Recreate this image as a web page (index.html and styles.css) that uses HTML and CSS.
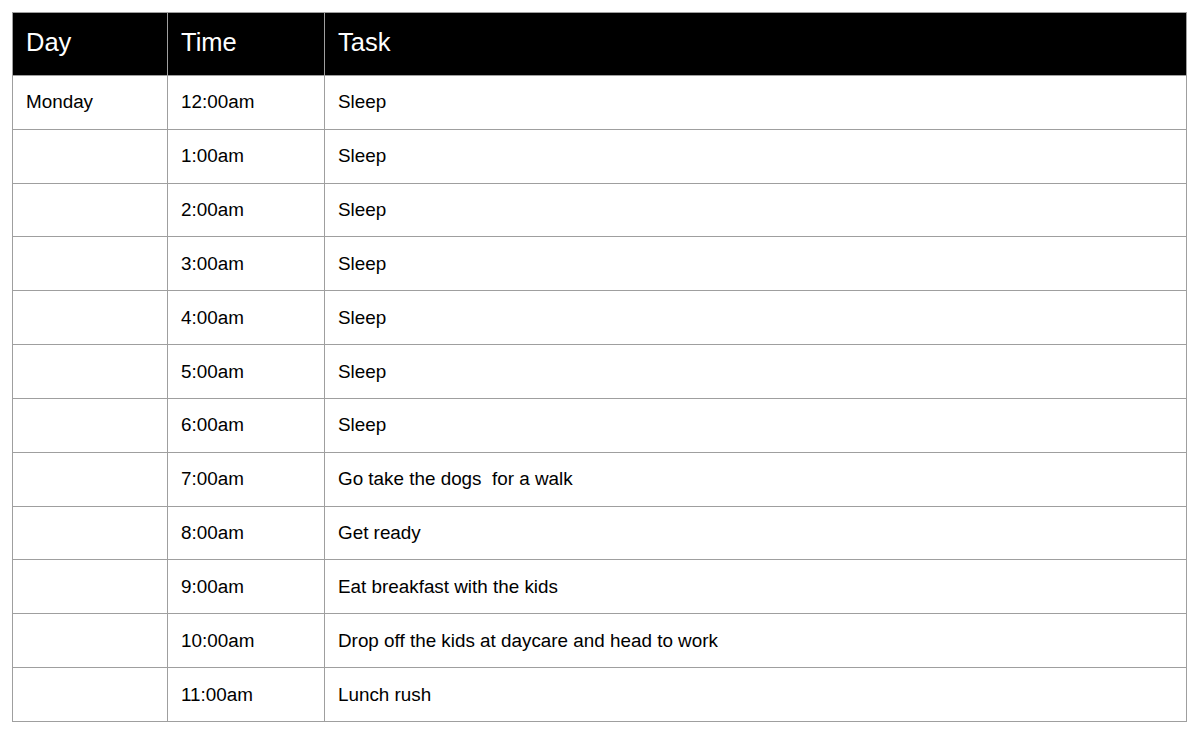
FILE: index.html
```html
<!DOCTYPE html>
<html>
<head>
<meta charset="utf-8">
<link rel="stylesheet" href="styles.css">
</head>
<body>
<table class="schedule">
  <colgroup>
    <col class="c-day">
    <col class="c-time">
    <col class="c-task">
  </colgroup>
  <thead>
    <tr class="head"><th>Day</th><th>Time</th><th>Task</th></tr>
  </thead>
  <tbody>
    <tr><td>Monday</td><td>12:00am</td><td>Sleep</td></tr>
    <tr><td></td><td>1:00am</td><td>Sleep</td></tr>
    <tr><td></td><td>2:00am</td><td>Sleep</td></tr>
    <tr><td></td><td>3:00am</td><td>Sleep</td></tr>
    <tr><td></td><td>4:00am</td><td>Sleep</td></tr>
    <tr><td></td><td>5:00am</td><td>Sleep</td></tr>
    <tr><td></td><td>6:00am</td><td>Sleep</td></tr>
    <tr><td></td><td>7:00am</td><td>Go take the dogs&nbsp; for a walk</td></tr>
    <tr><td></td><td>8:00am</td><td>Get ready</td></tr>
    <tr><td></td><td>9:00am</td><td>Eat breakfast with the kids</td></tr>
    <tr><td></td><td>10:00am</td><td>Drop off the kids at daycare and head to work</td></tr>
    <tr><td></td><td>11:00am</td><td>Lunch rush</td></tr>
  </tbody>
</table>
</body>
</html>
```
FILE: styles.css
```css
html, body {
  margin: 0;
  padding: 0;
  background: #ffffff;
}
body {
  padding: 12px 0 0 12px;
  font-family: "Liberation Sans", Arial, sans-serif;
  color: #000;
}
.schedule {
  border-collapse: collapse;
  table-layout: fixed;
  width: 1174px;
}
.c-day { width: 155px; }
.c-time { width: 157px; }
.c-task { width: 862px; }
.schedule th,
.schedule td {
  border: 1px solid #9f9f9f;
  padding: 0 13px;
  text-align: left;
  vertical-align: middle;
  white-space: nowrap;
}
.schedule th {
  background: #000;
  color: #fff;
  font-weight: normal;
  font-size: 25.5px;
  height: 63px;
  padding-bottom: 3px;
  box-sizing: border-box;
}
.schedule td {
  font-size: 18.85px;
  height: 53.83px;
  box-sizing: border-box;
}
```
